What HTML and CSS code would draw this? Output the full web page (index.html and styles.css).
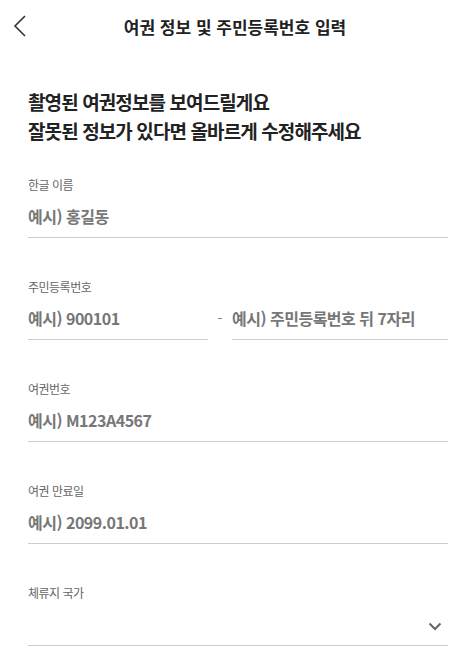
FILE: index.html
```html
<!DOCTYPE html>
<html lang="ko">
<head>
    <meta charset="UTF-8">
    <meta name="viewport" content="width=device-width, initial-scale=1.0">
    <title>여권 정보 및 주민등록번호 입력</title>
    <link rel="stylesheet" href="styles.css">
</head>
<body>
    <div class="topbar">
        <button class="voltar" aria-label="뒤로">
            <svg width="14" height="22" viewBox="0 0 14 22"><path d="M12 1 L2 11 L12 21" fill="none" stroke="#333" stroke-width="1.6"/></svg>
        </button>
        <h1 class="titulo">여권 정보 및 주민등록번호 입력</h1>
    </div>

    <div class="conteudo">
        <p class="chamada">촬영된 여권정보를 보여드릴게요<br>잘못된 정보가 있다면 올바르게 수정해주세요</p>

        <div class="campo">
            <label>한글 이름</label>
            <input class="entrada" placeholder="예시) 홍길동">
        </div>

        <div class="campo">
            <label>주민등록번호</label>
            <div class="linha-rrn">
                <input class="entrada frente" placeholder="예시) 900101">
                <span class="traco">-</span>
                <input class="entrada tras" placeholder="예시) 주민등록번호 뒤 7자리">
            </div>
        </div>

        <div class="campo">
            <label>여권번호</label>
            <input class="entrada" placeholder="예시) M123A4567">
        </div>

        <div class="campo">
            <label>여권 만료일</label>
            <input class="entrada" placeholder="예시) 2099.01.01">
        </div>

        <div class="campo">
            <label>체류지 국가</label>
            <div class="entrada selecao">
                <svg width="14" height="9" viewBox="0 0 14 9"><path d="M1.5 1.5 L7 7 L12.5 1.5" fill="none" stroke="#666" stroke-width="2"/></svg>
            </div>
        </div>
    </div>
</body>
</html>
```

FILE: styles.css
```css
*{
    margin: 0;
    padding: 0;
    box-sizing: border-box;
    font-family: "Noto Sans CJK KR", "Noto Sans", sans-serif;
}
body{background-color: #fff; color: #222;}
.topbar{
    height: 52px;
    display: flex;
    align-items: center;
    justify-content: center;
    position: relative;
}
.voltar{
    position: absolute;
    left: 10px;
    top: 14px;
    background: transparent;
    border: none;
    width: 20px;
    height: 24px;
    display: flex;
    align-items: center;
    justify-content: center;
}
.titulo{font-size: 17px; font-weight: bold; color: #222;}
.conteudo{padding: 35px 22px 0 28px;}
.chamada{
    font-size: 19px;
    letter-spacing: -0.9px;
    font-weight: bold;
    line-height: 29px;
    color: #222;
    margin-bottom: 31px;
}
.campo{margin-bottom: 40px;}
.campo label{
    display: block;
    font-size: 12px;
    letter-spacing: -0.5px;
    line-height: 18px;
    color: #666;
}
.entrada{
    display: block;
    width: 100%;
    height: 44px;
    border: none;
    border-bottom: 1px solid #ccc;
    outline: none;
    font-size: 16px;
    letter-spacing: -0.5px;
    font-weight: bold;
    color: #333;
    background: transparent;
}
.entrada::placeholder{color: #777;}
.linha-rrn{display: flex; align-items: center;}
.frente{width: 180px;}
.traco{width: 24px; text-align: center; color: #777; font-size: 14px;}
.tras{flex: 1;}
.selecao{
    display: flex;
    align-items: center;
    justify-content: flex-end;
    padding-right: 6px;
    padding-top: 6px;
}
```
